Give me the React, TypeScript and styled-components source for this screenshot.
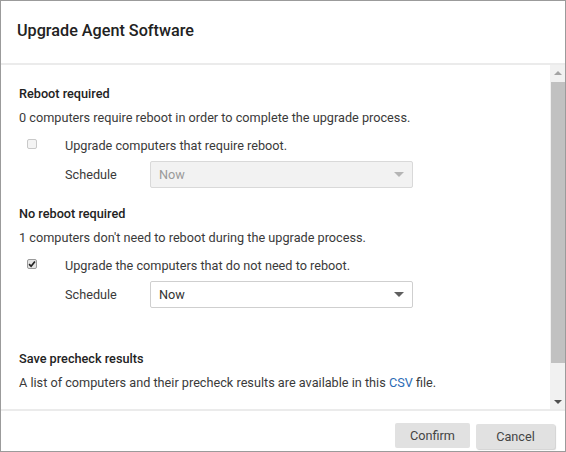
import styled, { createGlobalStyle } from "styled-components";

const GlobalStyle = createGlobalStyle`
  html, body {
    margin: 0;
    padding: 0;
    background: #ffffff;
  }
  body {
    font-family: Roboto, "Liberation Sans", Arial, sans-serif;
    color: #333333;
  }
`;

interface SectionProps {
  title: string;
  description: string;
  option: string;
  checked: boolean;
  disabled: boolean;
}

const Section = ({ title, description, option, checked, disabled }: SectionProps) => (
  <SectionStyled>
    <HeadingStyled>{title}</HeadingStyled>
    <DescStyled>{description}</DescStyled>
    <OptionRow>
      <CheckBox checked={checked}>
        {checked && (
          <svg width="8" height="8" viewBox="0 0 9 9">
            <path d="M1.2 4.6 L3.5 7 L7.8 1.6" fill="none" stroke="#222" strokeWidth="1.9" />
          </svg>
        )}
      </CheckBox>
      <OptionLabel>{option}</OptionLabel>
    </OptionRow>
    <ScheduleRow>
      <ScheduleLabel>Schedule</ScheduleLabel>
      <SelectBox disabled={disabled}>
        <span>Now</span>
        <SelectArrow disabled={disabled} />
      </SelectBox>
    </ScheduleRow>
  </SectionStyled>
);

const App = () => {
  return (
    <>
      <GlobalStyle />
      <DialogStyled>
        <HeaderStyled>
          <TitleStyled>Upgrade Agent Software</TitleStyled>
        </HeaderStyled>
        <BodyStyled>
          <ContentStyled>
            <Section
              title="Reboot required"
              description="0 computers require reboot in order to complete the upgrade process."
              option="Upgrade computers that require reboot."
              checked={false}
              disabled={true}
            />
            <Section
              title="No reboot required"
              description="1 computers don't need to reboot during the upgrade process."
              option="Upgrade the computers that do not need to reboot."
              checked={true}
              disabled={false}
            />
            <PrecheckStyled>
              <HeadingStyled>Save precheck results</HeadingStyled>
              <DescStyled>
                A list of computers and their precheck results are available in this <LinkStyled href="#">CSV</LinkStyled> file.
              </DescStyled>
            </PrecheckStyled>
          </ContentStyled>
          <ScrollTrack>
            <ScrollArrow up />
            <ScrollThumb />
            <ScrollSpacer />
            <ScrollArrow up={false} />
          </ScrollTrack>
        </BodyStyled>
        <FooterStyled>
          <ButtonStyled>Confirm</ButtonStyled>
          <ButtonStyled wide raised>
            Cancel
          </ButtonStyled>
        </FooterStyled>
      </DialogStyled>
    </>
  );
};

const DialogStyled = styled.div`
  width: 566px;
  height: 452px;
  box-sizing: border-box;
  border: 1px solid #9b9b9b;
  display: flex;
  flex-direction: column;
  background: #ffffff;
`;

const HeaderStyled = styled.div`
  height: 62px;
  flex-shrink: 0;
  display: flex;
  align-items: center;
  padding-left: 16px;
  border-bottom: 2px solid #ebebeb;
`;

const TitleStyled = styled.div`
  font-size: 16.2px;
  font-weight: 500;
  color: #222222;
  padding-bottom: 3px;
`;

const BodyStyled = styled.div`
  height: 344px;
  flex-shrink: 0;
  display: flex;
  flex-direction: row;
  border-bottom: 2px solid #ebebeb;
`;

const ContentStyled = styled.div`
  flex: 1 0 0;
  overflow: hidden;
  padding: 20px 0 0 18px;
`;

const SectionStyled = styled.div`
  margin-bottom: 17px;
`;

const PrecheckStyled = styled.div`
  margin-top: 42px;
`;

const HeadingStyled = styled.div`
  font-size: 12.7px;
  font-weight: 500;
  line-height: 18px;
  color: #222222;
`;

const DescStyled = styled.div`
  font-size: 12.7px;
  line-height: 18px;
  margin-top: 6px;
  color: #3a3a3a;
`;

const LinkStyled = styled.a`
  color: #2b6cb5;
  text-decoration: none;
`;

const OptionRow = styled.div`
  display: flex;
  align-items: center;
  height: 18px;
  margin-top: 9px;
  padding-left: 8px;
`;

const CheckBox = styled.span<{ checked: boolean }>`
  width: 10px;
  height: 10px;
  box-sizing: border-box;
  border: 1px solid ${({ checked }) => (checked ? "#9a9a9a" : "#c9c9c9")};
  border-radius: 2px;
  background: ${({ checked }) => (checked ? "#e4e4e4" : "#f4f4f4")};
  display: flex;
  align-items: center;
  justify-content: center;
  margin-top: -2px;
`;

const OptionLabel = styled.span`
  font-size: 12.7px;
  color: #3a3a3a;
  margin-left: 28px;
`;

const ScheduleRow = styled.div`
  display: flex;
  align-items: center;
  margin-top: 7px;
  padding-left: 46px;
`;

const ScheduleLabel = styled.span`
  width: 85px;
  font-size: 12.7px;
  color: #3a3a3a;
`;

const SelectBox = styled.div<{ disabled: boolean }>`
  width: 263px;
  height: 27px;
  box-sizing: border-box;
  border: 1px solid ${({ disabled }) => (disabled ? "#d9d9d9" : "#cfcfcf")};
  border-radius: 2px;
  background: ${({ disabled }) => (disabled ? "#f2f2f2" : "#ffffff")};
  color: ${({ disabled }) => (disabled ? "#9a9a9a" : "#333333")};
  font-size: 12.7px;
  display: flex;
  align-items: center;
  justify-content: space-between;
  padding: 0 3px 0 8px;
`;

const SelectArrow = styled.span<{ disabled: boolean }>`
  width: 0;
  height: 0;
  border-left: 5px solid transparent;
  border-right: 5px solid transparent;
  border-top: 5px solid ${({ disabled }) => (disabled ? "#b5b5b5" : "#5f5f5f")};
  margin-right: 5px;
`;

const ScrollTrack = styled.div`
  width: 15px;
  flex-shrink: 0;
  background: #f1f1f1;
  display: flex;
  flex-direction: column;
  align-items: stretch;
`;

const ScrollArrow = styled.div<{ up: boolean }>`
  height: 15px;
  display: flex;
  align-items: center;
  justify-content: center;

  &::after {
    content: "";
    width: 0;
    height: 0;
    border-left: 4px solid transparent;
    border-right: 4px solid transparent;
    ${({ up }) => (up ? "border-bottom: 4px solid #a3a3a3;" : "border-top: 4px solid #505050;")}
  }
`;

const ScrollThumb = styled.div`
  height: 281px;
  margin: 2px 0 0 1px;
  background: #c1c1c1;
`;

const ScrollSpacer = styled.div`
  flex: 1 0 0;
`;

const FooterStyled = styled.div`
  flex: 1 0 0;
  display: flex;
  justify-content: flex-end;
  align-items: flex-start;
  gap: 6px;
  padding: 12px 10px 0 0;
`;

const ButtonStyled = styled.button<{ wide?: boolean; raised?: boolean }>`
  width: ${({ wide }) => (wide ? "79px" : "75px")};
  height: 25px;
  margin-top: ${({ raised }) => (raised ? "1px" : "0")};
  border: none;
  border-radius: 2px;
  background: #e1e1e1;
  color: #454545;
  font-family: Roboto, "Liberation Sans", Arial, sans-serif;
  font-size: 12.7px;
  box-shadow: ${({ raised }) => (raised ? "1px 1px 1px rgba(0, 0, 0, 0.18)" : "none")};
  cursor: pointer;
`;

export default App;
